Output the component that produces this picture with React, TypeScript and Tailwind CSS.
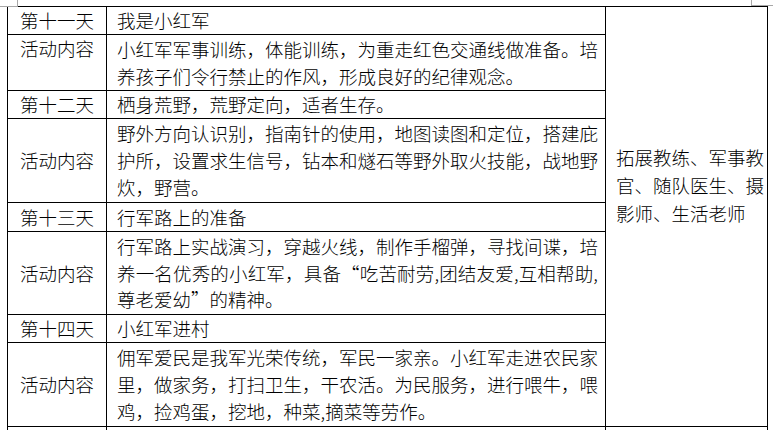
import React from "react";

type Row = {
  day: string;
  title: string;
  content: string[];
};

const rows: Row[] = [
  {
    day: "第十一天",
    title: "我是小红军",
    content: [
      "小红军军事训练，体能训练，为重走红色交通线做准备。培",
      "养孩子们令行禁止的作风，形成良好的纪律观念。",
    ],
  },
  {
    day: "第十二天",
    title: "栖身荒野，荒野定向，适者生存。",
    content: [
      "野外方向认识别，指南针的使用，地图读图和定位，搭建庇",
      "护所，设置求生信号，钻本和燧石等野外取火技能，战地野",
      "炊，野营。",
    ],
  },
  {
    day: "第十三天",
    title: "行军路上的准备",
    content: [
      "行军路上实战演习，穿越火线，制作手榴弹，寻找间谍，培",
      "养一名优秀的小红军，具备“吃苦耐劳,团结友爱,互相帮助,",
      "尊老爱幼”的精神。",
    ],
  },
  {
    day: "第十四天",
    title: "小红军进村",
    content: [
      "佣军爱民是我军光荣传统，军民一家亲。小红军走进农民家",
      "里，做家务，打扫卫生，干农活。为民服务，进行喂牛，喂",
      "鸡，捡鸡蛋，挖地，种菜,摘菜等劳作。",
    ],
  },
];

const staff = ["拓展教练、军事教", "官、随队医生、摄", "影师、生活老师"];

const cell = "border-r border-b border-black";

const Lines: React.FC<{ lines: string[] }> = ({ lines }) => (
  <>
    {lines.map((line, i) => (
      <div
        key={i}
        className={
          i < lines.length - 1
            ? "whitespace-nowrap [text-align-last:justify]"
            : "whitespace-nowrap"
        }
      >
        {line}
      </div>
    ))}
  </>
);

export default function App() {
  return (
    <div
      className="relative w-[773px] h-[430px] overflow-hidden bg-white text-black text-[18.5px] leading-[26.7px]"
      style={{ fontFamily: '"Noto Sans CJK SC", "Noto Sans", sans-serif' }}
    >
      {/* page corner marks */}
      <div className="absolute left-0 top-0 w-[18px] h-[7px] border-r border-b border-[#a8a8a8]" />
      <div className="absolute right-0 top-0 w-[22px] h-[6px] border-l border-b border-[#a8a8a8]" />

      <div className="ml-[7px] mt-[6px] w-[761px] grid grid-cols-[99px_499px_162px] grid-rows-[28px_56px_28px_84px_29px_83px_28px_84px_30px] border-l border-t border-black font-light">
        {rows.map((row, idx) => (
          <React.Fragment key={row.day}>
            <div className={`${cell} flex items-center justify-center`}>{row.day}</div>
            <div className={`${cell} flex items-center pl-[10px]`}>{row.title}</div>
            {idx === 0 && (
              <div className={`${cell} row-span-8 pl-[10px] pt-[136px]`}>
                {staff.map((s) => (
                  <div key={s} className="whitespace-nowrap leading-[28px]">
                    {s}
                  </div>
                ))}
              </div>
            )}
            <div
              className={`${cell} flex justify-center ${
                idx === 0 ? "items-start" : "items-center"
              }`}
            >
              活动内容
            </div>
            <div className={`${cell} pl-[10px] pr-[7px] flex flex-col justify-center`}>
              <Lines lines={row.content} />
            </div>
          </React.Fragment>
        ))}
        <div className={cell} />
        <div className={cell} />
        <div className={cell} />
      </div>
    </div>
  );
}
